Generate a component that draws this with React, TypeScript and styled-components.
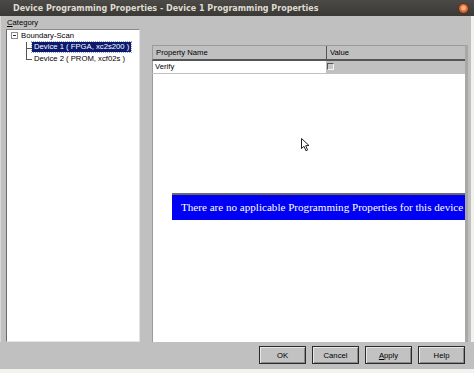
import React from "react"
import styled, { createGlobalStyle } from "styled-components"

const GlobalStyle = createGlobalStyle`
  html, body {
    margin: 0;
    padding: 0;
    background: #f4f2ee;
  }
  * {
    box-sizing: border-box;
  }
`

const Frame = styled.div`
  position: relative;
  width: 474px;
  height: 373px;
  display: flex;
  flex-direction: column;
  background: #c0c0c0;
  font-family: "Liberation Sans", Arial, sans-serif;
  font-size: 7.7px;
  color: #000;
  overflow: hidden;
`

const TitleBar = styled.div`
  height: 16px;
  flex: none;
  display: flex;
  align-items: center;
  justify-content: space-between;
  padding: 0 5px 0 13px;
  background: linear-gradient(#4b4a46, #3a3935);
  color: #dfdbd2;
  font-family: "DejaVu Sans", sans-serif;
  font-weight: bold;
  font-size: 8px;
  white-space: nowrap;
`

const CloseButton = styled.div`
  width: 11px;
  height: 11px;
  border-radius: 50%;
  background: radial-gradient(circle at 50% 45%, #f7b38a 0 25%, #e0703c 45%, #b9481c 100%);
  border: 1px solid #5a3020;
`

const Body = styled.div`
  flex: 1;
  display: flex;
  flex-direction: column;
  padding: 1px 3px 0 5px;
  border-left: 1px solid #d8d8d8;
  border-right: 3px solid #f4f2ee;
`

const CategoryLabel = styled.div`
  height: 11px;
  line-height: 11px;
  padding-left: 1px;
  margin-bottom: 1px;
  u {
    text-decoration: underline;
  }
`

const Panes = styled.div`
  flex: 1;
  display: flex;
  gap: 12px;
`

const TreePane = styled.div`
  width: 134px;
  height: 313px;
  background: #fff;
  border-left: 1px solid #6a6a6a;
  border-top: 1px solid #8a8a8a;
  border-right: 1px solid #e4e4e4;
  border-bottom: 1px solid #e4e4e4;
  padding: 0 0 0 4px;
  display: flex;
  flex-direction: column;
`

const TreeRow = styled.div<{ $indent: number }>`
  height: 11.5px;
  display: flex;
  align-items: center;
  padding-left: ${(p) => p.$indent}px;
  white-space: nowrap;
`

const Expander = styled.span`
  width: 7px;
  height: 7px;
  border: 1px solid #8c8c8c;
  background: #fff;
  position: relative;
  margin-right: 3px;
  &::after {
    content: "";
    position: absolute;
    left: 1px;
    top: 2px;
    width: 3px;
    height: 1px;
    background: #333;
  }
`

const Branch = styled.span<{ $last?: boolean }>`
  position: relative;
  align-self: flex-start;
  width: 5px;
  height: ${(p) => (p.$last ? 7 : 11.5)}px;
  border-left: 1px solid #555;
  &::after {
    content: "";
    position: absolute;
    left: 0;
    top: 6px;
    width: 5px;
    height: 1px;
    background: #555;
  }
`

const NodeLabel = styled.span<{ $selected?: boolean }>`
  margin-left: 1px;
  padding: 0 2px;
  line-height: 10px;
  background: ${(p) => (p.$selected ? "#0c1a6e" : "transparent")};
  color: ${(p) => (p.$selected ? "#fff" : "#000")};
  outline: ${(p) => (p.$selected ? "1px dotted #8ea0d8" : "none")};
`

const TablePane = styled.div`
  flex: 1;
  margin-top: 16px;
  height: 297px;
  display: flex;
  flex-direction: column;
  overflow: hidden;
  border-right: 3px solid #a8a8a8;
`

const HeaderRow = styled.div`
  display: flex;
  height: 16px;
  flex: none;
  border-top: 1px solid #9a9a9a;
  border-bottom: 2px solid #555;
  border-left: 1px solid #9a9a9a;
`

const HeaderCell = styled.div<{ $width?: number }>`
  ${(p) => (p.$width ? `width: ${p.$width}px;` : "flex: 1;")}
  display: flex;
  align-items: center;
  padding-left: 3px;
  border-right: 1px solid #555;
  &:last-child {
    border-right: none;
  }
`

const DataRow = styled.div`
  display: flex;
  height: 12px;
  flex: none;
`

const NameCell = styled.div`
  width: 174px;
  background: #fff;
  padding-left: 2px;
  line-height: 12px;
  border-left: 1px solid #9a9a9a;
`

const ValueCell = styled.div`
  flex: 1;
  padding: 2px 0 0 1px;
`

const CheckBox = styled.span`
  display: block;
  width: 7px;
  height: 7px;
  border-top: 1px solid #555;
  border-left: 1px solid #555;
  border-right: 1px solid #f4f4f4;
  border-bottom: 1px solid #f4f4f4;
  background: #c8c8c8;
`

const EmptyArea = styled.div`
  flex: 1;
  margin-top: 1px;
  background: #fff;
  padding-top: 119px;
  padding-left: 19px;
  border-left: 1px solid #9a9a9a;
`

const Message = styled.div`
  width: 320px;
  height: 27px;
  background: #0000f4;
  border-top: 2px solid #6a6a6a;
  color: #fff;
  font-family: "Liberation Serif", "Times New Roman", serif;
  font-size: 11.1px;
  line-height: 24px;
  padding-left: 9px;
  white-space: nowrap;
`

const ButtonRow = styled.div`
  flex: none;
  height: 27px;
  display: flex;
  justify-content: flex-end;
  align-items: flex-start;
  gap: 6px;
  padding: 4px 9px 0 0;
`

const Button = styled.button`
  width: 47px;
  height: 18px;
  padding: 0;
  background: #c2c2c2;
  border: 1px solid #2a2a2a;
  box-shadow: inset 1px 1px 0 #e8e8e8, inset -1px -1px 0 #8a8a8a;
  font-family: "Liberation Sans", Arial, sans-serif;
  font-size: 7.7px;
  color: #000;
  u {
    text-decoration: underline;
  }
`

const BottomStrip = styled.div`
  flex: none;
  height: 5px;
  background: #f4f2ee;
`

const Cursor = styled.svg`
  position: absolute;
  left: 301px;
  top: 138px;
`

export default function App() {
  return (
    <>
      <GlobalStyle />
      <Frame>
        <TitleBar>
          <span>Device Programming Properties - Device 1 Programming Properties</span>
          <CloseButton />
        </TitleBar>
        <Body>
          <CategoryLabel>
            <u>C</u>ategory
          </CategoryLabel>
          <Panes>
            <TreePane>
              <TreeRow $indent={0}>
                <Expander />
                <span>Boundary-Scan</span>
              </TreeRow>
              <TreeRow $indent={15}>
                <Branch />
                <NodeLabel $selected>Device 1 ( FPGA, xc2s200 )</NodeLabel>
              </TreeRow>
              <TreeRow $indent={15}>
                <Branch $last />
                <NodeLabel>Device 2 ( PROM, xcf02s )</NodeLabel>
              </TreeRow>
            </TreePane>
            <TablePane>
              <HeaderRow>
                <HeaderCell $width={174}>Property Name</HeaderCell>
                <HeaderCell>Value</HeaderCell>
              </HeaderRow>
              <DataRow>
                <NameCell>Verify</NameCell>
                <ValueCell>
                  <CheckBox />
                </ValueCell>
              </DataRow>
              <EmptyArea>
                <Message>There are no applicable Programming Properties for this device</Message>
              </EmptyArea>
            </TablePane>
          </Panes>
        </Body>
        <ButtonRow>
          <Button>OK</Button>
          <Button>Cancel</Button>
          <Button>
            <u>A</u>pply
          </Button>
          <Button>Help</Button>
        </ButtonRow>
        <BottomStrip />
        <Cursor width="9" height="14" viewBox="0 0 9 14">
          <path d="M0.5 0.5 L0.5 10.5 L3 8.3 L5 12.8 L6.6 12 L4.7 7.7 L8 7.5 Z" fill="#fff" stroke="#222" strokeWidth="1" />
        </Cursor>
      </Frame>
    </>
  )
}
